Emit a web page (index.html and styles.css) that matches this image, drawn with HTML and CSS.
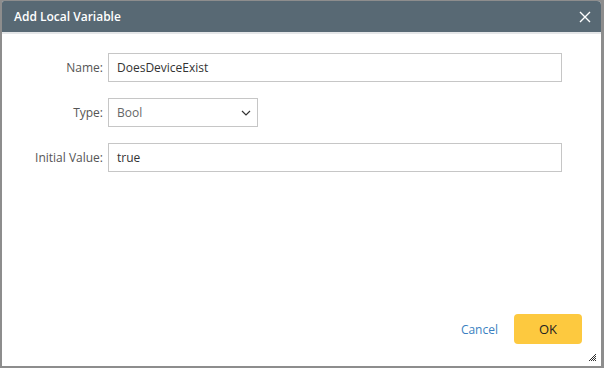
FILE: index.html
```html
<!DOCTYPE html>
<html>
<head>
<meta charset="utf-8">
<link rel="stylesheet" href="styles.css">
</head>
<body>
<div class="dialog">
  <div class="header">
    <span class="title">Add Local Variable</span>
    <svg class="close" width="12" height="12" viewBox="0 0 12 12"><path d="M1 1 L11 11 M11 1 L1 11" stroke="#fff" stroke-width="1.4" fill="none"/></svg>
  </div>
  <div class="body">
    <div class="row">
      <label class="label">Name:</label>
      <div class="input wide">DoesDeviceExist</div>
    </div>
    <div class="row">
      <label class="label">Type:</label>
      <div class="input select"><span class="muted">Bool</span>
        <svg width="10" height="6" viewBox="0 0 10 6"><path d="M1 1 L5 5 L9 1" stroke="#333" stroke-width="1.2" fill="none"/></svg>
      </div>
    </div>
    <div class="row">
      <label class="label">Initial Value:</label>
      <div class="input wide">true</div>
    </div>
  </div>
  <div class="footer">
    <span class="cancel">Cancel</span>
    <span class="ok">OK</span>
  </div>
  <svg class="grip" width="9" height="9" viewBox="0 0 9 9"><path d="M8 1 L1 8 M8 3 L3 8 M8 5 L5 8 M8 7 L7 8" stroke="#333" stroke-width="1" fill="none"/></svg>
</div>
</body>
</html>
```
FILE: styles.css
```css
html, body {
  margin: 0;
  padding: 0;
}
body {
  width: 604px;
  height: 368px;
  overflow: hidden;
  background: #8d8d8d;
  font-family: "Open Sans", "Liberation Sans", sans-serif;
  font-size: 12px;
  padding-top: 1px;
  box-sizing: border-box;
}
.dialog {
  position: relative;
  margin-left: 2px;
  width: 599px;
  height: 365px;
  background: #fff;
  display: flex;
  flex-direction: column;
  border-radius: 2px 4px 0 0;
}
.header {
  height: 31px;
  background: #586974;
  border-bottom: 2px solid #e4e6e8;
  display: flex;
  align-items: center;
  justify-content: space-between;
  padding: 0 10px 0 12px;
  border-radius: 2px 4px 0 0;
}
.title {
  color: #fff;
  font-weight: 600;
  font-size: 12px;
}
.close {
  display: block;
}
.body {
  flex: 1;
  padding-top: 19px;
  display: flex;
  flex-direction: column;
  gap: 16px;
}
.row {
  display: flex;
  align-items: center;
}
.label {
  width: 101px;
  text-align: right;
  color: #555;
  margin-right: 5px;
}
.input {
  box-sizing: border-box;
  height: 29px;
  border: 1px solid #c6c6c6;
  padding: 0 8px;
  display: flex;
  align-items: center;
  color: #333;
}
.wide {
  width: 454px;
}
.select {
  width: 150px;
  justify-content: space-between;
  padding-right: 6px;
}
.muted {
  color: #666;
}
.footer {
  display: flex;
  align-items: center;
  justify-content: flex-end;
  padding: 0 19px 22px 0;
  gap: 16px;
}
.cancel {
  color: #3a7fc1;
}
.ok {
  width: 68px;
  height: 30px;
  background: #fdc93f;
  border-radius: 4px;
  display: flex;
  align-items: center;
  justify-content: center;
  color: #222;
  font-size: 13px;
}
.grip {
  position: absolute;
  right: 4px;
  bottom: 4px;
}
```
